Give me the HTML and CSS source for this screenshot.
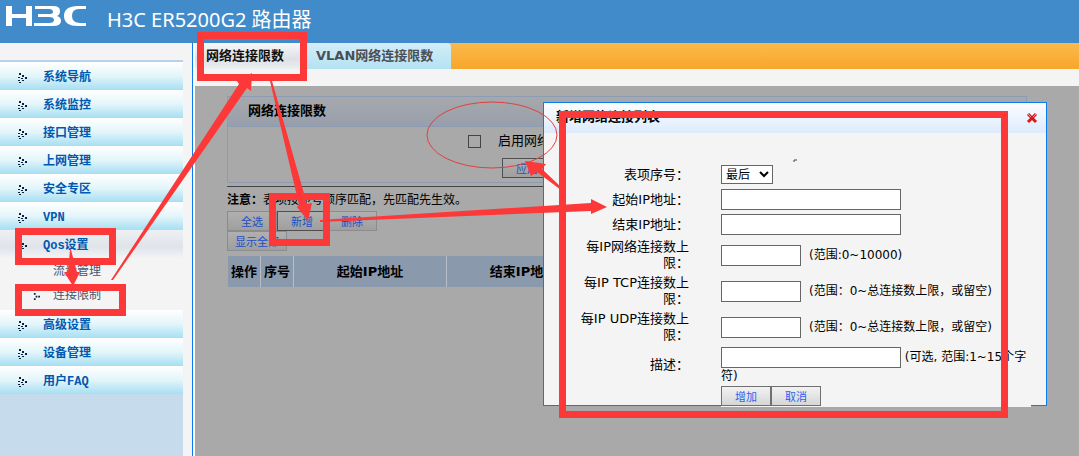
FILE: index.html
```html
<!DOCTYPE html>
<html lang="zh-CN">
<head>
  <meta charset="UTF-8">
  <meta name="viewport" content="width=device-width, initial-scale=1.0">
  <title>H3C ER5200G2 路由器</title>
  <link rel="stylesheet" href="styles.css">
</head>
<body>
  <svg class="symbols" aria-hidden="true">
    <symbol id="dots" viewBox="0 0 10 11">
      <path d="M1 0h2v2H1zM4 2h2v2H4zM0 4h2v1H0zM7 4h2v2H7zM3 5h2v1H3zM4 7h2v1H4zM0 7h2v1H0zM1 9h2v1H1z"/>
    </symbol>
  </svg>

  <header class="header">
    <svg class="logo" viewBox="0 0 82 20" role="img" aria-label="H3C">
      <path d="M1 0h6v8h14V0h6v20h-6v-8H7v8H1zM30 0h18q7 0 7 5 0 4-3 5 4 1 4 5 0 5-8 5H29v-3h15q5 0 5-3 0-3-5-3H33V8h11q4 0 4-2 0-3-4-3H30zM81 0v3h-7q-7 0-7 7t8 7h6v3H73q-14 0-14-10T73 0z"/>
    </svg>
    <h1>H3C ER5200G2 路由器</h1>
  </header>

  <div class="layout">
    <nav class="sidebar">
      <ul class="menu">
        <li><a href="#"><svg><use href="#dots"/></svg>系统导航</a></li>
        <li><a href="#"><svg><use href="#dots"/></svg>系统监控</a></li>
        <li><a href="#"><svg><use href="#dots"/></svg>接口管理</a></li>
        <li><a href="#"><svg><use href="#dots"/></svg>上网管理</a></li>
        <li><a href="#"><svg><use href="#dots"/></svg>安全专区</a></li>
        <li><a href="#"><svg><use href="#dots"/></svg>VPN</a></li>
        <li>
          <a href="#" class="open"><svg><use href="#dots"/></svg>Qos设置</a>
          <ul class="submenu">
            <li><a href="#">流量管理</a></li>
            <li><a href="#" class="current"><svg viewBox="0 0 8 8"><path d="M1 0h2v2H1zM3 3h2v2H3zM1 6h2v2H1zM6 3h2v2H6z"/></svg>连接限制</a></li>
          </ul>
        </li>
        <li><a href="#"><svg><use href="#dots"/></svg>高级设置</a></li>
        <li><a href="#"><svg><use href="#dots"/></svg>设备管理</a></li>
        <li><a href="#"><svg><use href="#dots"/></svg>用户FAQ</a></li>
      </ul>
    </nav>

    <main class="content">
      <div class="tabs">
        <a href="#" class="tab active">网络连接限数</a>
        <a href="#" class="tab">VLAN网络连接限数</a>
      </div>

      <div class="page">
        <section class="panel">
          <h2>网络连接限数</h2>
          <div class="panel-body">
            <label class="enable"><input type="checkbox">启用网络连接限数</label>
            <button type="button" class="btn apply">应用</button>
          </div>
        </section>

        <p class="note"><b>注意：</b>表项按序号顺序匹配，先匹配先生效。</p>
        <div class="actions">
          <button type="button" class="btn">全选</button><button type="button" class="btn focus">新增</button><button type="button" class="btn">删除</button>
        </div>
        <div class="actions">
          <button type="button" class="btn wide">显示全部</button>
        </div>

        <table class="list">
          <tr>
            <th class="col-op">操作</th>
            <th class="col-op">序号</th>
            <th class="col-ip">起始IP地址</th>
            <th class="col-ip">结束IP地址</th>
            <th>描述</th>
          </tr>
        </table>
      </div>
    </main>
  </div>

  <div class="dialog" role="dialog" aria-labelledby="dialog-title">
    <div class="dialog-head">
      <h2 id="dialog-title">新增网络连接列表</h2>
      <button type="button" class="close" aria-label="关闭">
        <svg viewBox="0 0 12 12"><path d="M2 2l8 8M10 2l-8 8" stroke="#d8191c" stroke-width="3"/><path d="M2 2l3 3M10 2L7 5" stroke="#f29a9a" stroke-width="1"/></svg>
      </button>
    </div>
    <form class="form">
      <div class="row">
        <label for="index">表项序号：</label>
        <div class="field"><select id="index"><option>最后</option></select></div>
      </div>
      <div class="row">
        <label for="start">起始IP地址：</label>
        <div class="field"><input type="text" id="start"></div>
      </div>
      <div class="row">
        <label for="end">结束IP地址：</label>
        <div class="field"><input type="text" id="end"></div>
      </div>
      <div class="row tall">
        <label for="total">每IP网络连接数上限：</label>
        <div class="field"><input type="text" id="total" class="short"><span class="hint">(范围:0~10000)</span></div>
      </div>
      <div class="row tall">
        <label for="tcp">每IP TCP连接数上限：</label>
        <div class="field"><input type="text" id="tcp" class="short"><span class="hint">(范围：0~总连接数上限，或留空)</span></div>
      </div>
      <div class="row tall">
        <label for="udp">每IP UDP连接数上限：</label>
        <div class="field"><input type="text" id="udp" class="short"><span class="hint">(范围：0~总连接数上限，或留空)</span></div>
      </div>
      <div class="row last">
        <label for="desc">描述：</label>
        <div class="field desc"><input type="text" id="desc"> (可选, 范围:1~15个字符)</div>
      </div>
      <div class="buttons">
        <button type="button" class="btn">增加</button><button type="button" class="btn">取消</button>
      </div>
    </form>
  </div>

  <!-- red guide marks over the page -->
  <svg class="marks" width="1079" height="456" viewBox="0 0 1079 456" aria-hidden="true">
    <g class="boxes">
      <rect x="200.5" y="35.5" width="103" height="42"/>
      <rect x="18.5" y="231.5" width="94" height="30"/>
      <rect x="18.5" y="287.5" width="104" height="25"/>
      <rect x="272.5" y="196.5" width="54" height="46"/>
      <rect x="562.5" y="114.5" width="442" height="300"/>
    </g>
    <ellipse cx="492" cy="135" rx="65" ry="33"/>
    <g class="arrows">
      <path d="M111 280L239 84L237 81L252 73L251 91L247 88L113 280z"/>
      <path d="M270 81L299 205L297 207L308 221L312 203L307 204L272 81z"/>
      <path d="M320 220L591 203V199L607 207L591 214V211L320 222z"/>
      <path d="M525 161L546 164L542 169L561 187V190L537 172L531 176z"/>
      <path d="M70 250L68 272H64L73 286L80 272H77L71 250z"/>
    </g>
    <path class="tick" d="M794 162v-2h3"/>
  </svg>
</body>
</html>
```
FILE: styles.css
```css
* {
  box-sizing: border-box;
}
body {
  margin: 0;
  min-height: 100vh;
  display: flex;
  flex-direction: column;
  position: relative;
  overflow: hidden;
  background: #f4f4f4;
  font-family: "DejaVu Sans", "Noto Sans CJK SC", sans-serif;
  font-size: 13px;
  line-height: 16px;
  color: #000;
}
h1, h2, p, ul {
  margin: 0;
  padding: 0;
}
ul {
  list-style: none;
}
a {
  color: inherit;
  text-decoration: none;
}
.symbols {
  display: none;
}

/* Header */
.header {
  display: flex;
  gap: 20px;
  height: 43px;
  padding: 6px 5px 0;
  background: #428bca;
  color: #fff;
}
.logo {
  width: 82px;
  height: 20px;
  fill: #fff;
}
.header h1 {
  font: 20px/28px "Noto Sans", "Noto Sans CJK SC", sans-serif;
}

/* Sidebar */
.layout {
  flex: 1;
  display: flex;
}
.sidebar {
  width: 193px;
  flex: none;
  display: flex;
  padding: 17px 9px 0 0;
  border-right: 1px solid #0a7cf0;
}
.menu {
  flex: 1;
  border-top: 2px solid #b5d3ee;
  background: #c6dcec;
  font-family: "Liberation Mono", "Noto Sans CJK SC", monospace;
  font-size: 12px;
}
.menu > li > a {
  display: flex;
  align-items: center;
  gap: 15px;
  height: 28px;
  padding: 4px 0 0 18px;
  background: linear-gradient(#fff, #e4f5fa 50%, #a5dff2);
  color: #0058b0;
  font-weight: bold;
}
.menu > li > a svg {
  width: 10px;
  height: 11px;
  fill: #10203c;
}
.menu > li > a.open {
  background: linear-gradient(#eef0f3, #dfe4ea 60%, #f2f3f5);
}
.submenu {
  padding: 2px 0;
  background: #f4f4f4;
  color: #46536e;
}
.submenu a {
  display: flex;
  align-items: center;
  justify-content: flex-end;
  gap: 13px;
  width: 101px;
  height: 24px;
}
.submenu svg {
  width: 7px;
  height: 7px;
  fill: #10203c;
}

/* Tabs */
.content {
  flex: 1;
  min-width: 0;
  display: flex;
  flex-direction: column;
  padding-left: 2px;
  background: #fff;
}
.tabs {
  display: flex;
  height: 26px;
  background: linear-gradient(#fdb94a, #f6a62c);
}
.tab {
  width: 144px;
  padding: 5px 0 0 9px;
  border-radius: 0 4px 0 0;
  background: linear-gradient(#d3edf7, #b4e2f3);
  color: #4a4f55;
  font-weight: bold;
  white-space: nowrap;
}
.tab.active {
  width: 112px;
  padding-left: 11px;
  background: linear-gradient(#f8f8f9, #dde1e6 60%, #eceef0);
  color: #111;
}

/* Page */
.page {
  flex: 1;
  margin-top: 17px;
  padding: 10px 52px 0 32px;
  background: #a9a9a9;
  box-shadow: 0 -17px #f4f4f4;
}
.panel {
  border: 1px solid #8c9cb2;
}
.panel h2 {
  height: 30px;
  padding: 6px 20px;
  border-bottom: 1px solid #8c9cb2;
  background: linear-gradient(#a6a8ac, #989fab);
  font-size: 13px;
  line-height: 16px;
}
.panel-body {
  display: flex;
  flex-direction: column;
  align-items: flex-start;
  gap: 9px;
  padding: 6px 0 4px;
}
.enable {
  display: flex;
  align-items: center;
  gap: 17px;
  height: 16px;
  margin-left: 240px;
}
.enable input {
  appearance: none;
  width: 13px;
  height: 13px;
  margin: 0;
  border: 1px solid #444;
}
.btn {
  width: 50px;
  height: 20px;
  padding: 0;
  border: 1px solid #8c8c8c;
  background: linear-gradient(#b0b0b0, #9f9f9f);
  color: #1c4fc4;
  font-family: inherit;
  font-size: 11px;
}
.btn.focus, .btn.apply {
  border-color: #4f4f4f;
}
.btn.wide {
  width: 60px;
}
.apply {
  margin-left: 274px;
}
.note {
  margin-top: 3px;
  padding: 5px 0 3px;
  border-top: 1px solid #444;
  font-size: 12px;
}
.actions {
  display: flex;
}
.list {
  width: 100%;
  margin-top: 4px;
  table-layout: fixed;
  border-spacing: 1px;
}
.list th {
  height: 31px;
  padding: 0;
  background: #8a99ab;
  box-shadow: 1px 0 #b9bfc6;
}
.col-op {
  width: 32px;
}
.col-ip {
  width: 152px;
}

/* Dialog */
.dialog {
  position: absolute;
  left: 543px;
  top: 102px;
  width: 504px;
  height: 304px;
  border: 1px solid #0a7cf0;
  background: #f4f4f4;
}
.dialog-head {
  display: flex;
  justify-content: space-between;
  height: 30px;
  padding: 6px 8px 0 12px;
  background: linear-gradient(#fcfdff, #dcebfc);
}
.dialog-head h2 {
  font-size: 13px;
  line-height: 16px;
}
.close {
  width: 12px;
  height: 12px;
  margin-top: 3px;
  padding: 0;
  border: 0;
  background: none;
}
.close svg {
  display: block;
}
.form {
  padding: 29px 15px 0 27px;
}
.row {
  display: flex;
  align-items: center;
  gap: 32px;
  min-height: 25px;
}
.row.tall {
  min-height: 36px;
}
.row.last {
  min-height: 40px;
}
.row label {
  width: 118px;
  flex: none;
  text-align: right;
}
.field {
  flex: 1;
  display: flex;
  align-items: center;
}
.field input {
  width: 180px;
  height: 21px;
  border: 1px solid #666;
  background: #fff;
}
.field input.short {
  width: 80px;
}
.field select {
  width: 52px;
  height: 19px;
  padding: 0;
  border: 1px solid #666;
  background: #fff;
  font-family: inherit;
  font-size: 12px;
}
.hint {
  margin-left: 8px;
  font-size: 12px;
}
.field.desc {
  display: block;
  font-size: 12px;
}
.desc input {
  vertical-align: middle;
}
/* the button row runs over the bottom border */
.buttons {
  display: flex;
  margin-left: 150px;
  padding: 1px 0;
  background: #f4f4f4;
}
.buttons .btn {
  border-color: #707070;
  background: linear-gradient(#f2f2f2, #d6d6d6);
  color: #2563f0;
}

/* Guide marks */
.marks {
  position: absolute;
  left: 0;
  top: 0;
  pointer-events: none;
}
.boxes {
  fill: none;
  stroke: #fc3838;
  stroke-width: 7;
}
.marks ellipse {
  fill: none;
  stroke: #e0403f;
}
.arrows {
  fill: #fc3838;
}
.tick {
  fill: none;
  stroke: #444;
}
```
